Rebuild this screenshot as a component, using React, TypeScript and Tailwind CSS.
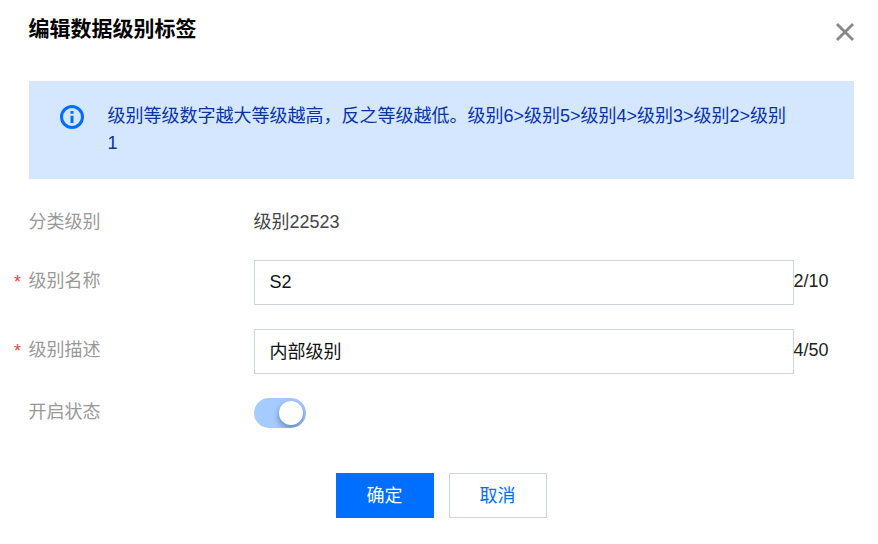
import { ReactNode, useState } from 'react';

interface FormRowProps {
  label: string;
  required?: boolean;
  className?: string;
  labelClassName?: string;
  children: ReactNode;
}

function FormRow({ label, required = false, className = '', labelClassName = '', children }: FormRowProps) {
  return (
    <div className={`flex items-center ${className}`}>
      <div className={`flex w-60 shrink-0 items-center text-[#999999] ${labelClassName}`}>
        <span className="w-[14.5px] pt-px text-[#e54545]">{required ? '*' : ''}</span>
        {label}
      </div>
      {children}
    </div>
  );
}

interface CountedInputProps {
  value: string;
  max: number;
  label: string;
  className?: string;
  onChange: (value: string) => void;
}

function CountedInput({ value, max, label, className = '', onChange }: CountedInputProps) {
  return (
    <>
      <input
        aria-label={label}
        value={value}
        maxLength={max}
        onChange={(event) => onChange(event.target.value)}
        className={`h-[45px] w-[540px] border border-[#cfd5de] bg-white px-[14.5px] text-[#111111] outline-none focus:border-[#006eff] ${className}`}
      />
      <span className="-ml-[0.5px] pb-0.5 text-[#222222]">{`${value.length}/${max}`}</span>
    </>
  );
}

export default function App() {
  const [name, setName] = useState('S2');
  const [description, setDescription] = useState('内部级别');
  const [enabled, setEnabled] = useState(true);

  return (
    <div
      role="dialog"
      aria-labelledby="dialog-title"
      className="h-[544px] w-[878px] overflow-hidden bg-white font-['Liberation_Sans','Noto_Sans_CJK_SC',sans-serif] text-[18px] leading-[27px] text-black"
    >
      <div className="flex h-[81px] items-start justify-between pr-[23px] pl-[28.5px]">
        <h2 id="dialog-title" className="pt-[15px] text-[21px] leading-[28px] font-bold">
          编辑数据级别标签
        </h2>
        <button type="button" aria-label="关闭" className="mt-[22px]">
          <svg width="20" height="20" viewBox="0 0 20 20" fill="none" stroke="#888" strokeWidth="2.8">
            <path d="M2 2l16 16M18 2L2 18" />
          </svg>
        </button>
      </div>

      <div className="mr-6 ml-[29px] flex h-[98px] items-start bg-[#d5e7ff] pt-[22px] pl-[31px] text-[#0832a8]">
        <svg className="mt-0.5 shrink-0" width="24" height="24" viewBox="0 0 24 24" fill="none" stroke="#006eff" strokeWidth="3">
          <circle cx="12" cy="12" r="10.5" />
          <path d="M12 6v2.7M12 10.7V18" />
        </svg>
        <p className="ml-[23.5px] w-[684px]">
          级别等级数字越大等级越高，反之等级越低。级别6&gt;级别5&gt;级别4&gt;级别3&gt;级别2&gt;级别1
        </p>
      </div>

      <div className="pl-3.5">
        <FormRow label="分类级别" className="mt-[30px]" labelClassName="text-[#888888]">
          <span className="-ml-[0.5px] text-[#444444]">级别22523</span>
        </FormRow>
        <FormRow label="级别名称" required className="mt-6" labelClassName="pb-0.5">
          <CountedInput label="级别名称" value={name} max={10} onChange={setName} />
        </FormRow>
        <FormRow label="级别描述" required className="mt-6" labelClassName="pb-0.5">
          <CountedInput label="级别描述" value={description} max={50} onChange={setDescription} className="pb-[3px]" />
        </FormRow>
        <FormRow label="开启状态" className="mt-6" labelClassName="pb-0.5">
          <button
            type="button"
            role="switch"
            aria-label="开启状态"
            aria-checked={enabled}
            onClick={() => setEnabled(!enabled)}
            className={`flex h-[30px] w-[52px] items-center overflow-hidden rounded-full px-[3px] ${enabled ? 'justify-end bg-[#a6cbff]' : 'justify-start bg-[#cfd5de]'}`}
          >
            <span className="h-6 w-6 rounded-full bg-white shadow-[0_3px_6px_rgba(0,40,100,0.45)]" />
          </button>
        </FormRow>
      </div>

      <div className="mt-[45px] flex gap-[15px] pl-[336px]">
        <button type="button" className="h-[45px] w-[98px] bg-[#006eff] pt-0.5 pr-px text-white">
          确定
        </button>
        <button type="button" className="h-[45px] w-[98px] border border-[#cfd5de] bg-white pt-0.5 pr-px text-[#006eff]">
          取消
        </button>
      </div>
    </div>
  );
}
